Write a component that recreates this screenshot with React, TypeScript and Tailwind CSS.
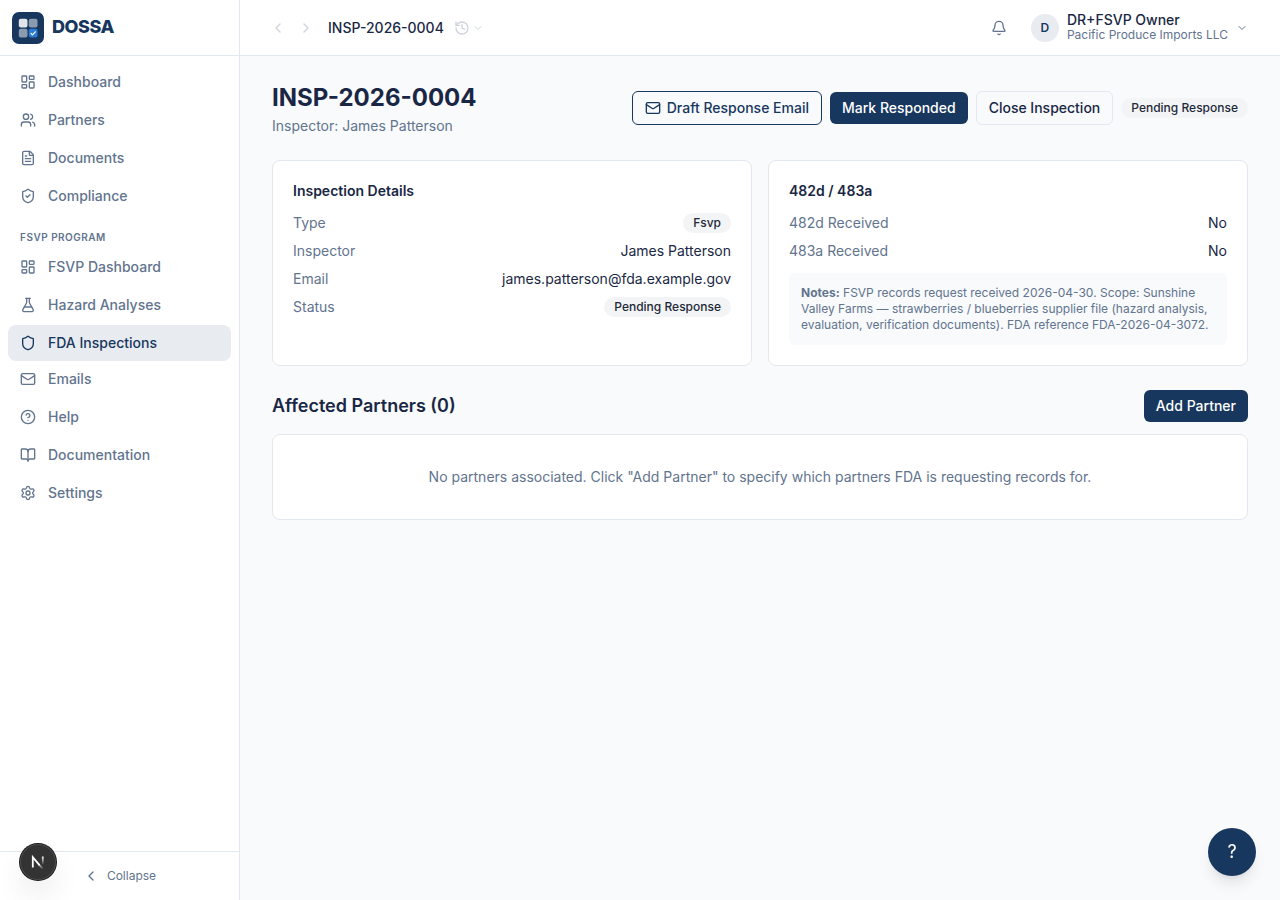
import React from "react";
import {
  Bell,
  BookOpen,
  ChevronDown,
  ChevronLeft,
  ChevronRight,
  CircleHelp,
  FileText,
  FlaskConical,
  History,
  LayoutDashboard,
  Mail,
  Settings,
  Shield,
  ShieldCheck,
  Users,
  type LucideIcon,
} from "lucide-react";

interface NavItem {
  label: string;
  icon: LucideIcon;
  active?: boolean;
}

const mainNav: NavItem[] = [
  { label: "Dashboard", icon: LayoutDashboard },
  { label: "Partners", icon: Users },
  { label: "Documents", icon: FileText },
  { label: "Compliance", icon: ShieldCheck },
];

const fsvpNav: NavItem[] = [
  { label: "FSVP Dashboard", icon: LayoutDashboard },
  { label: "Hazard Analyses", icon: FlaskConical },
  { label: "FDA Inspections", icon: Shield, active: true },
];

const secondaryNav: NavItem[] = [
  { label: "Emails", icon: Mail },
  { label: "Help", icon: CircleHelp },
  { label: "Documentation", icon: BookOpen },
  { label: "Settings", icon: Settings },
];

const NavList = ({ items }: { items: NavItem[] }) => (
  <ul className="flex flex-col gap-0.5">
    {items.map(({ label, icon: Icon, active }) => (
      <li key={label}>
        <a
          href="#"
          aria-current={active ? "page" : undefined}
          className={`flex h-9 items-center gap-3 rounded-lg px-3 text-sm font-medium ${
            active ? "bg-[#e8ebef] text-[#17375e]" : "text-slate-500"
          }`}
        >
          <Icon className="size-4 shrink-0" />
          {label}
        </a>
      </li>
    ))}
  </ul>
);

const Logo = () => (
  <svg viewBox="0 0 32 32" className="size-8 shrink-0" aria-hidden="true">
    <rect width="32" height="32" rx="7" fill="#17375e" />
    <rect x="6.8" y="6.8" width="8.7" height="8.7" rx="2" fill="#fff" fillOpacity="0.87" />
    <rect x="16.8" y="6.8" width="8.7" height="8.7" rx="2" fill="#fff" fillOpacity="0.5" />
    <rect x="6.8" y="16.8" width="8.7" height="8.7" rx="2" fill="#fff" fillOpacity="0.5" />
    <rect x="16.8" y="16.8" width="8.7" height="8.7" rx="2" fill="#2b7cd8" />
    <path
      d="M19 21.4l1.4 1.4 2.9-3"
      fill="none"
      stroke="#fff"
      strokeWidth="1.2"
      strokeLinecap="round"
      strokeLinejoin="round"
    />
  </svg>
);

const Badge = ({ children }: { children: React.ReactNode }) => (
  <span className="inline-flex h-5 items-center rounded-full bg-gray-100 px-2.5 text-xs font-medium whitespace-nowrap text-gray-800">
    {children}
  </span>
);

const Row = ({ label, children }: { label: string; children: React.ReactNode }) => (
  <div className="flex h-5 items-center justify-between text-sm">
    <dt className="text-slate-500">{label}</dt>
    <dd className="flex items-center">{children}</dd>
  </div>
);

const Sidebar = () => (
  <aside className="flex w-60 shrink-0 flex-col border-r border-slate-200 bg-white">
    <div className="flex h-14 items-center gap-2 border-b border-slate-200 px-3">
      <Logo />
      <span className="pb-0.5 text-lg font-extrabold tracking-tight text-[#17375e]">DOSSA</span>
    </div>
    <nav className="flex-1 px-2 pt-2">
      <NavList items={mainNav} />
      <h2 className="px-3 pt-4 pb-1 text-[10px] leading-[15px] font-semibold tracking-wider text-slate-500 uppercase">
        FSVP Program
      </h2>
      <NavList items={fsvpNav} />
      <NavList items={secondaryNav} />
    </nav>
    <div className="border-t border-slate-200">
      <button className="flex h-12 w-full items-center justify-center gap-2 text-xs text-slate-500">
        <ChevronLeft className="size-4" />
        Collapse
      </button>
    </div>
  </aside>
);

const Topbar = () => (
  <header className="flex h-14 shrink-0 items-center justify-between border-b border-slate-200 bg-white px-6">
    <div className="flex items-center">
      <button
        aria-label="Back"
        className="flex size-7 items-center justify-center text-slate-500 opacity-30"
      >
        <ChevronLeft className="size-4" />
      </button>
      <button
        aria-label="Forward"
        className="flex size-7 items-center justify-center text-slate-500 opacity-30"
      >
        <ChevronRight className="size-4" />
      </button>
      <span className="ml-2 text-sm font-medium">INSP-2026-0004</span>
      <button
        aria-label="History"
        className="ml-2 flex h-7 items-center gap-0.5 px-0.5 text-slate-500 opacity-30"
      >
        <History className="size-4" />
        <ChevronDown className="size-3" />
      </button>
    </div>
    <div className="flex items-center gap-2">
      <button
        aria-label="Notifications"
        className="flex size-8 items-center justify-center text-slate-500"
      >
        <Bell className="size-4" />
      </button>
      <button className="flex items-center gap-2 px-2 text-left">
        <span className="flex size-7 items-center justify-center rounded-full bg-[#e8ebef] text-xs font-semibold text-[#17375e]">
          D
        </span>
        <span className="flex flex-col">
          <span className="text-sm leading-[14px] font-medium">DR+FSVP Owner</span>
          <span className="text-xs leading-4 text-slate-500">Pacific Produce Imports LLC</span>
        </span>
        <ChevronDown className="size-3 text-slate-500" />
      </button>
    </div>
  </header>
);

export default function App() {
  return (
    <div className="flex min-h-screen bg-[#f8fafc] font-[Inter,sans-serif] text-[#1a2744]">
      <Sidebar />
      <div className="flex min-w-0 flex-1 flex-col">
        <Topbar />
        <main className="px-8 py-6">
          <div className="mb-6 flex items-center justify-between gap-4">
            <div>
              <h1 className="text-2xl leading-9 font-bold">INSP-2026-0004</h1>
              <p className="text-sm text-slate-500">Inspector: James Patterson</p>
            </div>
            <div className="flex items-center gap-2 text-sm font-medium">
              <button className="flex items-center gap-1.5 rounded-md border border-[#17375e] px-3 py-1.5 text-[#17375e]">
                <Mail className="size-4" />
                Draft Response Email
              </button>
              <button className="rounded-md bg-[#17375e] px-3 py-1.5 text-white">
                Mark Responded
              </button>
              <button className="rounded-md border border-slate-200 px-3 py-1.5">
                Close Inspection
              </button>
              <Badge>Pending Response</Badge>
            </div>
          </div>

          <div className="mb-6 grid grid-cols-2 gap-4">
            <section className="rounded-lg border border-slate-200 bg-white p-5">
              <h2 className="mb-3 text-sm font-semibold">Inspection Details</h2>
              <dl className="flex flex-col gap-2">
                <Row label="Type">
                  <Badge>Fsvp</Badge>
                </Row>
                <Row label="Inspector">James Patterson</Row>
                <Row label="Email">james.patterson@fda.example.gov</Row>
                <Row label="Status">
                  <Badge>Pending Response</Badge>
                </Row>
              </dl>
            </section>
            <section className="rounded-lg border border-slate-200 bg-white p-5">
              <h2 className="mb-3 text-sm font-semibold">482d / 483a</h2>
              <dl className="flex flex-col gap-2">
                <Row label="482d Received">No</Row>
                <Row label="483a Received">No</Row>
              </dl>
              <p className="mt-3 rounded-md bg-[#f8fafc] p-3 text-xs text-slate-500">
                <strong className="font-bold">Notes:</strong> FSVP records request received
                2026-04-30. Scope: Sunshine Valley Farms — strawberries / blueberries supplier
                file (hazard analysis, evaluation, verification documents). FDA reference
                FDA-2026-04-3072.
              </p>
            </section>
          </div>

          <div className="mb-3 flex items-center justify-between">
            <h2 className="text-lg font-semibold">Affected Partners (0)</h2>
            <button className="rounded-md bg-[#17375e] px-3 py-1.5 text-sm font-medium text-white">
              Add Partner
            </button>
          </div>
          <div className="rounded-lg border border-slate-200 bg-white px-5 py-8 text-center text-sm text-slate-500">
            No partners associated. Click "Add Partner" to specify which partners FDA is
            requesting records for.
          </div>
        </main>
      </div>

      {/* Help button */}
      <button
        aria-label="Open help"
        className="fixed right-6 bottom-6 flex size-12 items-center justify-center rounded-full bg-[#17375e] text-lg text-white shadow-lg"
      >
        ?
      </button>

      {/* Dev tools indicator */}
      <button
        aria-label="Open dev tools"
        className="fixed bottom-5 left-5 flex size-9 items-center justify-center rounded-full bg-[#333] shadow-[0_0_0_1px_#171717,inset_0_0_0_1px_#4a4a4a,0_16px_32px_-8px_rgba(0,0,0,0.24)]"
      >
        <svg viewBox="0 0 20 20" className="size-5" fill="none" aria-hidden="true">
          <defs>
            <linearGradient id="fade-leg" x1="11" y1="10" x2="16" y2="17" gradientUnits="userSpaceOnUse">
              <stop stopColor="#fff" />
              <stop offset="1" stopColor="#fff" stopOpacity="0" />
            </linearGradient>
            <linearGradient id="fade-bar" x1="15" y1="4" x2="15" y2="13" gradientUnits="userSpaceOnUse">
              <stop stopColor="#fff" />
              <stop offset="1" stopColor="#fff" stopOpacity="0" />
            </linearGradient>
          </defs>
          <path d="M4.8 15.5V5.2L11.5 13.2" stroke="#fff" strokeWidth="1.8" />
          <path d="M10.8 12.3L15 17" stroke="url(#fade-leg)" strokeWidth="1.8" />
          <path d="M14.8 4.5V13" stroke="url(#fade-bar)" strokeWidth="1.8" />
        </svg>
      </button>
    </div>
  );
}
